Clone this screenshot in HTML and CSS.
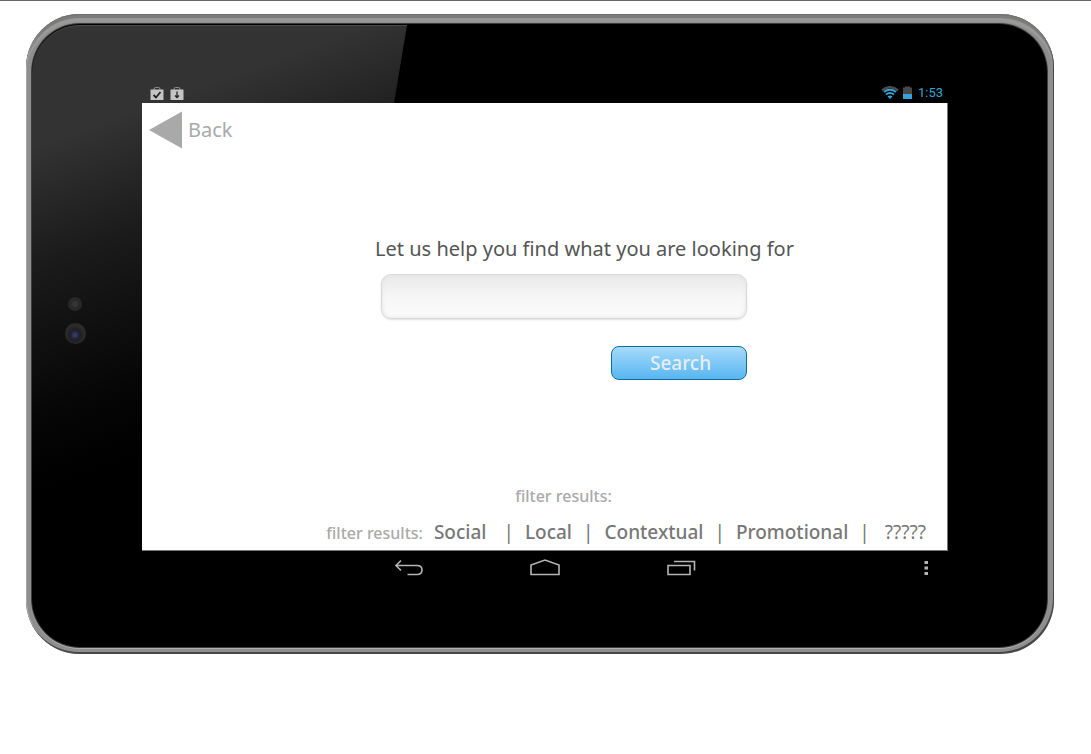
FILE: index.html
```html
<!DOCTYPE html>
<html lang="en">
<head>
    <meta charset="UTF-8">
    <meta name="viewport" content="width=device-width, initial-scale=1.0">
    <title>Search</title>
    <link rel="stylesheet" href="styles.css">
</head>
<body>
    <div class="tablet">
        <div class="face">
            <div class="cameras">
                <div class="sensor"></div>
                <div class="camera"></div>
            </div>

            <div class="display">
                <div class="status-bar">
                    <div class="status-group">
                        <svg width="14" height="14" viewBox="0 0 14 14">
                            <path d="M4 3V2q0-1.500 1.500-1.500h3q1.500 0 1.500 1.500v1" fill="none" stroke="#8f8f8f"/>
                            <path d="M0.500 2.500h13V13h-13z" fill="#c4c4c4"/>
                            <path d="M3.500 8l2.500 2.500 4.500-5.500" fill="none" stroke="#222" stroke-width="1.800"/>
                        </svg>
                        <svg width="14" height="14" viewBox="0 0 14 14">
                            <path d="M4 3V2q0-1.500 1.500-1.500h3q1.500 0 1.500 1.500v1" fill="none" stroke="#8f8f8f"/>
                            <path d="M0.500 2.500h13V13h-13z" fill="#c4c4c4"/>
                            <path d="M7 4.500v6M5 8.500l2 2 2-2" fill="none" stroke="#222" stroke-width="1.300"/>
                        </svg>
                    </div>
                    <div class="status-group status-right">
                        <svg width="18" height="14" viewBox="0 0 18 14">
                            <path d="M1 4.500Q9-2 17 4.500" fill="none" stroke="#4b4b4b" stroke-width="2.500"/>
                            <path d="M3 6Q9 1.500 15 6" fill="none" stroke="#33a5d6" stroke-width="2"/>
                            <path d="M5 8.500Q9 5.500 13 8.500" fill="none" stroke="#33a5d6" stroke-width="2"/>
                            <path d="M6.500 10.500Q9 8.500 11.500 10.500L9 13z" fill="#33a5d6"/>
                        </svg>
                        <svg width="9" height="14" viewBox="0 0 9 14">
                            <path d="M0 1.500h2V0.500h5v1h2v7H0z" fill="#484848"/>
                            <path d="M0 8h9v5H0z" fill="#33a5d6"/>
                        </svg>
                        <span class="clock">1:53</span>
                    </div>
                </div>

                <main class="screen">
                    <a href="#" class="back">
                        <svg width="33" height="38" viewBox="0 0 33 38">
                            <path d="M0 19L33 0.500V37.500z" fill="#a9a9a9"/>
                        </svg>
                        <span>Back</span>
                    </a>

                    <form class="search">
                        <label for="query">Let us help you find what you are looking for</label>
                        <input type="text" id="query">
                        <button type="button">Search</button>
                    </form>

                    <p class="filter-title">filter results:</p>

                    <div class="filters">
                        <span class="filter-label">filter results:</span>
                        <a href="#" class="first">Social</a>
                        <span>|</span>
                        <a href="#">Local</a>
                        <span>|</span>
                        <a href="#">Contextual</a>
                        <span>|</span>
                        <a href="#">Promotional</a>
                        <span>|</span>
                        <a href="#" class="last">?????</a>
                    </div>
                </main>

                <nav class="nav-bar">
                    <button type="button" aria-label="Back">
                        <svg width="30" height="18" viewBox="0 0 30 18">
                            <path d="M7 1.500L2 6.500l5 5M2 6.500h21q5 0 5 4.500t-5 4.500h-9.500" fill="none" stroke="#b5b5b5" stroke-width="1.600"/>
                        </svg>
                    </button>
                    <button type="button" aria-label="Home">
                        <svg width="30" height="18" viewBox="0 0 30 18">
                            <path d="M1 15.500V6L15 1l14 5v9.500z" fill="none" stroke="#b5b5b5" stroke-width="1.600"/>
                        </svg>
                    </button>
                    <button type="button" aria-label="Recent apps">
                        <svg width="30" height="18" viewBox="0 0 30 18">
                            <path d="M2 6.500h22v9H2zM8 2.500h20.500v9" fill="none" stroke="#b5b5b5" stroke-width="1.600"/>
                        </svg>
                    </button>
                    <button type="button" class="more" aria-label="More">
                        <svg width="4" height="16" viewBox="0 0 4 16">
                            <path d="M0.500 1h3.500v3H0.500zM0.500 6.500h3.500v3H0.500zM0.500 12h3.500v3H0.500z" fill="#b5b5b5"/>
                        </svg>
                    </button>
                </nav>
            </div>
        </div>
    </div>
</body>
</html>
```

FILE: styles.css
```css
* {
    margin: 0;
    padding: 0;
    box-sizing: border-box;
}

body {
    font-family: "Noto Sans", "Open Sans", sans-serif;
    background-color: #fff;
    border-top: 1px solid #68686a;
    padding: 13px 37px 20px 26px;
}

a {
    text-decoration: none;
}

svg {
    display: block;
    flex: none;
}

/* Tablet frame */
.tablet {
    padding: 10px 7px 7px 6px;
    border-radius: 54px;
    background-color: #8e8e8e;
    box-shadow: inset 0 1px 0 #6f6f6f, inset -1px -2px 0 #484648, inset 1px 0 0 #a8a8a8, inset 0 4px 0 #7c7c7a, inset 0 8px 0 #999;
}

.face {
    position: relative;
    display: grid;
    grid-template-columns: 110px 1fr 99px;
    border-radius: 48px;
    background-color: #000;
    box-shadow: 0 0 0 1px #3c3c3c, 0 1px 0 1px #b0b0b0;
    overflow: hidden;
}

/* Light reflection on the glass */
.face::before {
    content: "";
    position: absolute;
    top: 1px;
    left: 0;
    width: 375px;
    height: 480px;
    border-top: 1px solid #4a4a4a;
    border-radius: 48px 0 0 0;
    background: linear-gradient(160deg, #333 115px, #1b1b1b 225px, #060606 370px, #000 440px);
    clip-path: polygon(0 0, 100% 0, 295px 100%, 0 100%);
}

.cameras,
.display {
    position: relative;
}

.cameras {
    display: flex;
    flex-direction: column;
    align-items: center;
    gap: 12px;
    padding: 273px 24px 0 0;
}

.sensor {
    width: 14px;
    height: 14px;
    border-radius: 50%;
    background: radial-gradient(circle, #363636 2px, #282828 4px);
}

.camera {
    width: 21px;
    height: 21px;
    border-radius: 50%;
    background: radial-gradient(circle at 10px 12px, #333f63 1px, #22223a 4px, #202020 6px, #2b2b2b 9px);
}

.display {
    padding: 62px 0;
}

.status-bar {
    display: flex;
    justify-content: space-between;
    align-items: flex-end;
    height: 17px;
    padding: 0 5px 2px 8px;
}

.status-group {
    display: flex;
    gap: 6px;
}

.status-right {
    gap: 4px;
    align-items: center;
}

.clock {
    margin-left: 2px;
    font-family: Roboto, sans-serif;
    font-size: 13px;
    line-height: 16px;
    color: #33a5d6;
}

/* Screen content */
.screen {
    padding: 8px 21px 3px 7px;
    border: 1px solid #777;
    border-width: 0 1px 1px 0;
    background-color: #fff;
}

.back {
    display: inline-flex;
    align-items: center;
    gap: 6px;
    font-size: 20px;
    line-height: 28px;
    color: #a9a9a9;
}

.search {
    display: flex;
    flex-direction: column;
    align-items: center;
    padding-left: 52px;
    margin-top: 81px;
}

.search label {
    margin-left: 42px;
    font-size: 20px;
    line-height: 28px;
    white-space: nowrap;
    color: #555;
}

.search input {
    width: 366px;
    height: 45px;
    margin: 11px 0 27px;
    padding: 0 14px;
    border: 1px solid #d9d9d9;
    border-radius: 10px;
    background: linear-gradient(#e9e9e9, #f6f6f6 50%, #fbfbfb);
    box-shadow: inset 0 0 4px #e4e4e4, 0 1px 2px #e0e0e0;
    font-family: inherit;
    font-size: 18px;
    outline: none;
}

.search button {
    width: 136px;
    height: 34px;
    margin-left: 230px;
    padding: 0 0 1px 4px;
    border: 1px solid #0f6f99;
    border-radius: 8px;
    background: linear-gradient(#a6dafb, #58b6f0);
    font-family: inherit;
    font-size: 19px;
    font-weight: 500;
    color: #e8eef2;
    cursor: pointer;
}

.filter-title,
.filters .filter-label {
    font-size: 16px;
    font-weight: 500;
    color: #a9a9a9;
}

.filter-title {
    margin-top: 105px;
    padding-left: 52px;
    line-height: 22px;
    text-align: center;
}

.filters {
    display: flex;
    justify-content: flex-end;
    align-items: baseline;
    gap: 11px;
    margin-top: 11px;
    font-size: 19px;
    line-height: 28px;
    white-space: nowrap;
    color: #777;
}

.filters a {
    font-weight: 500;
    color: #777;
}

.filters .first {
    margin-right: 6px;
}

.filters .last {
    margin-left: 4px;
    font-weight: 400;
}

/* Android navigation */
.nav-bar {
    display: flex;
    justify-content: center;
    align-items: center;
    gap: 106px;
    position: relative;
    height: 34px;
}

.nav-bar button {
    border: none;
    background: none;
    cursor: pointer;
}

.nav-bar .more {
    position: absolute;
    right: 20px;
}
```
